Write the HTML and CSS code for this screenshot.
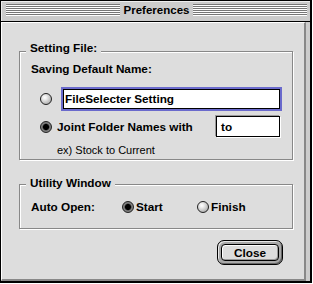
FILE: index.html
```html
<!DOCTYPE html>
<html>
<head>
<meta charset="utf-8">
<title>Preferences</title>
<link rel="stylesheet" href="styles.css">
</head>
<body>
<div class="window">
  <div class="titlebar">
    <div class="stripes"></div>
    <div class="title">Preferences</div>
    <div class="stripes"></div>
  </div>
  <div class="frame">
    <div class="content">
      <section class="group group-file">
        <div class="legend">Setting File:</div>
        <div class="label">Saving Default Name:</div>
        <div class="row row-name">
          <span class="radio"></span>
          <div class="field-focus"><div class="field-box">FileSelecter Setting</div></div>
        </div>
        <div class="row row-joint">
          <span class="radio radio-on"></span>
          <span class="row-label">Joint Folder Names with</span>
          <div class="field-small">to</div>
        </div>
        <div class="hint">ex) Stock to Current</div>
      </section>
      <section class="group group-utility">
        <div class="legend">Utility Window</div>
        <div class="row row-auto">
          <span class="auto-label">Auto Open:</span>
          <span class="radio radio-on"></span>
          <span class="opt opt-start">Start</span>
          <span class="radio"></span>
          <span class="opt">Finish</span>
        </div>
      </section>
      <div class="actions">
        <div class="default-ring"><button class="btn">Close</button></div>
      </div>
    </div>
  </div>
</div>
</body>
</html>
```

FILE: styles.css
```css
* { box-sizing: border-box; margin: 0; padding: 0; }
html, body { background: #fff; }
body {
  margin: 0;
  font-family: "Liberation Sans", Arial, sans-serif;
  font-size: 11.75px;
  font-weight: bold;
  line-height: 14px;
  color: #000;
}
.window {
  width: 312px;
  height: 283px;
  border: 1px solid #000;
  border-right-width: 2px;
  border-bottom-width: 2px;
  background: #cccccc;
  display: flex;
  flex-direction: column;
}
.titlebar {
  height: 21px;
  flex: none;
  border-bottom: 1px solid #000;
  display: flex;
  align-items: flex-start;
  padding: 0 3px 0 5px;
  box-shadow: inset 1px 1px 0 #eee;
}
.stripes {
  flex: 1;
  height: 12px;
  margin-top: 3px;
  background: repeating-linear-gradient(to bottom, #777 0 1px, #fff 1px 2px);
}
.title {
  padding: 0 4px;
  margin-top: 3px;
  line-height: 13px;
  font-size: 11.5px;
}
.frame {
  flex: 1;
  display: flex;
  padding-right: 4px;
}
.content {
  flex: 1;
  background: #dddddd;
  border-left: 1px solid #fff;
  border-top: 1px solid #fff;
  border-right: 2px solid #888;
  border-bottom: 2px solid #888;
  padding: 28px 0 0 17px;
  display: flex;
  flex-direction: column;
}
.group {
  width: 274px;
  border: 1px solid #888;
  box-shadow: 1px 1px 0 #fff, inset 1px 1px 0 #fff;
  padding: 0 10px 0 11px;
  display: flex;
  flex-direction: column;
}
.group-file { height: 109px; }
.group-utility { height: 45px; margin-top: 24px; }
.legend {
  align-self: flex-start;
  background: #dddddd;
  padding: 0 4px;
  margin-left: -5px;
  margin-top: -11px;
}
.group-utility .legend { margin-top: -9px; }
.label { margin-top: 7px; }
.row { display: flex; align-items: center; }
.row-name { margin-top: 11px; height: 24px; }
.row-joint { margin-top: 4px; height: 23px; }
.radio {
  flex: none;
  width: 12px;
  height: 12px;
  border-radius: 50%;
  border: 1px solid #222;
  background: radial-gradient(circle at 38% 35%, #ffffff 0, #f2f2f2 18%, #b8b8b8 70%, #8a8a8a 100%);
}
.radio-on {
  background: radial-gradient(circle at 50% 50%, #000 0 2.6px, #444 3.2px, #888 4px, #555 100%);
}
.row-name .radio, .row-joint .radio { margin-left: 9px; }
.field-focus {
  flex: 1;
  margin-left: 9px;
  height: 24px;
  border: 2px solid #6a6acc;
}
.field-box {
  height: 100%;
  border: 1px solid #000;
  background: #fff;
  padding: 1px 0 0 1px;
  line-height: 16px;
}
.row-label { margin-left: 5px; }
.field-small {
  margin-left: auto;
  margin-right: 2px;
  width: 64px;
  height: 21px;
  border: 1px solid #000;
  background: #fff;
  box-shadow: -1px -1px 0 #999, 1px 1px 0 #fff;
  padding-left: 4px;
  line-height: 19px;
}
.hint {
  margin-top: 6px;
  padding-left: 26px;
  font-weight: normal;
  font-size: 11px;
  line-height: 13px;
}
.row-auto { margin-top: 10px; height: 14px; }
.auto-label { width: 91px; flex: none; }
.opt { margin-left: 2px; }
.opt-start { width: 61px; flex: none; }
.actions {
  margin-top: 11px;
  display: flex;
  justify-content: flex-end;
  padding-right: 21px;
}
.default-ring {
  width: 66px;
  height: 25px;
  border: 1px solid #000;
  border-radius: 7px;
  padding: 3px;
  background: #a8a8a8;
  box-shadow: inset 1px 1px 0 #e8e8e8, inset -1px -1px 0 #666;
}
.btn {
  display: block;
  width: 100%;
  height: 100%;
  border: 1px solid #000;
  border-radius: 4px;
  background: #dddddd;
  box-shadow: inset 1px 1px 0 #fff, inset -1px -1px 0 #999;
  font: inherit;
  line-height: 14px;
  color: #000;
}
```
